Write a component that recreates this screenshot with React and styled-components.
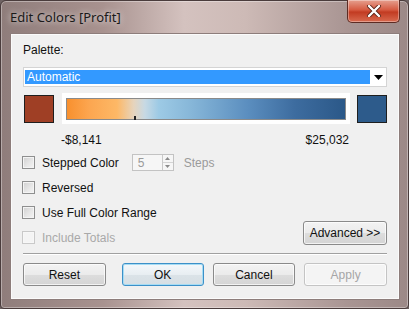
import React from "react";
import styled, { createGlobalStyle } from "styled-components";

const Global = createGlobalStyle`
  html, body { margin: 0; padding: 0; background: #6e6262; }
  body { font-family: "Liberation Sans", Arial, sans-serif; }
  * { box-sizing: border-box; }
`;

const Window = styled.div`
  width: 409px;
  height: 309px;
  display: flex;
  flex-direction: column;
  padding: 0 8px 8px 9px;
  border: 1px solid #4a3c3c;
  border-radius: 6px 6px 4px 4px;
  background:
    linear-gradient(90deg, #8f7d7b 0%, #a8928f 25%, #d4c2bf 45%, #cdbab6 60%, #a99593 85%, #9c8987 100%);
  box-shadow: inset 0 0 0 1px rgba(255,255,255,0.35);
`;

const TitleBar = styled.div`
  height: 32px;
  display: flex;
  align-items: flex-start;
  justify-content: space-between;
`;

const Title = styled.div`
  font-family: "Noto Sans", "Open Sans", sans-serif;
  font-size: 13px;
  color: #1a1a1a;
  padding-top: 7px;
  text-shadow: 0 0 6px rgba(255,255,255,0.9);
`;

const CloseButton = styled.div`
  width: 53px;
  height: 23px;
  margin-top: -1px;
  border: 1px solid #5c2b23;
  border-top: none;
  border-radius: 0 0 5px 5px;
  background: linear-gradient(180deg, #e6a08f 0%, #d65a41 45%, #c23b22 55%, #d86a4f 100%);
  display: flex;
  align-items: center;
  justify-content: center;
  box-shadow: inset 0 0 0 1px rgba(255,255,255,0.35);
`;

const Client = styled.div`
  flex: 1;
  background: #f0f0f0;
  border: 1px solid #8d7d7b;
  box-shadow: inset 0 0 0 1px #fbfbfb;
  display: flex;
  flex-direction: column;
  padding: 9px 12px 0 12px;
`;

const Label = styled.div`
  font-size: 12px;
  line-height: 14px;
  height: 14px;
  color: #111;
`;

const Dropdown = styled.div`
  margin-top: 10px;
  height: 20px;
  background: #fff;
  border: 1px solid #d4d4d4;
  display: flex;
  align-items: stretch;
  padding: 2px 0 2px 1px;
`;

const Selected = styled.div`
  flex: 1;
  background: #3399ff;
  color: #fff;
  font-size: 12px;
  line-height: 14px;
  padding-left: 2px;
`;

const Arrow = styled.div`
  width: 16px;
  display: flex;
  align-items: center;
  justify-content: center;
`;

const GradientRow = styled.div`
  margin-top: 6px;
  height: 31px;
  display: flex;
  align-items: center;
  justify-content: space-between;
`;

const Swatch = styled.div`
  width: 30px;
  height: 28px;
  margin-left: ${p => (p.$right ? "0" : "1px")};
  background: ${p => p.$color};
  border: 1px solid #1e1e1e;
`;

const GradientFrame = styled.div`
  width: 288px;
  height: 31px;
  background: #fff;
  padding: 5px 4px 4px 4px;
  display: flex;
`;

const GradientBar = styled.div`
  position: relative;
  flex: 1;
  border: 1px solid #8a8a8a;
  background: linear-gradient(90deg, #f8902e 0%, #fca650 8%, #fdb866 18%, #e6d4bd 24%, #c7d9e4 28%, #9dcae5 33%, #86b6d8 45%, #5b8ebf 65%, #3d6c9f 82%, #2b5888 100%);
`;

const Tick = styled.div`
  position: absolute;
  left: 67px;
  bottom: -1px;
  width: 2px;
  height: 4px;
  background: #222;
`;

const ValueRow = styled.div`
  display: flex;
  justify-content: space-between;
  margin-top: 9px;
  padding: 0 38px 0 38px;
  height: 14px;
  font-size: 12px;
  line-height: 14px;
  color: #111;
`;

const Options = styled.div`
  display: flex;
  justify-content: space-between;
  align-items: flex-end;
  margin-top: 7px;
`;

const OptionList = styled.div`
  display: flex;
  flex-direction: column;
  gap: 8px;
`;

const OptionRow = styled.div`
  display: flex;
  align-items: center;
  height: 17px;
  font-size: 12px;
  color: ${p => (p.$disabled ? "#a9a9a9" : "#111")};
`;

const Check = styled.span`
  width: 13px;
  height: 13px;
  margin-left: -1px;
  margin-right: 7px;
  border: 1px solid ${p => (p.$disabled ? "#c9c9c9" : "#8e8f8f")};
  background: ${p =>
    p.$disabled
      ? "#f4f4f4"
      : "linear-gradient(135deg, #d0d0d0 0%, #e8e8e8 60%, #f4f4f4 100%)"};
  box-shadow: inset 0 0 0 1px ${p => (p.$disabled ? "#f7f7f7" : "#f4f4f4")};
`;

const Spin = styled.div`
  margin-left: 13px;
  width: 42px;
  height: 17px;
  border: 1px solid #c3c3c3;
  background: #f6f6f6;
  display: flex;
  align-items: center;
  justify-content: space-between;
  padding-left: 5px;
  color: #9a9a9a;
`;

const SpinButtons = styled.div`
  width: 11px;
  height: 15px;
  border-left: 1px solid #c9c9c9;
  display: flex;
  flex-direction: column;
`;

const SpinHalf = styled.div`
  flex: 1;
  display: flex;
  align-items: center;
  justify-content: center;
  border-top: ${p => (p.$down ? "1px solid #d4d4d4" : "none")};
`;

const StepsText = styled.span`
  margin-left: 10px;
  color: #9a9a9a;
`;

const Button = styled.div`
  width: ${p => p.$w || 83}px;
  height: ${p => p.$h || 23}px;
  margin-left: ${p => p.$ml || 0}px;
  display: flex;
  align-items: center;
  justify-content: center;
  font-size: 12px;
  border-radius: 3px;
  color: ${p => (p.$disabled ? "#a6a6a6" : "#111")};
  border: 1px solid ${p => (p.$primary ? "#3c90c8" : p.$disabled ? "#c4c4c4" : "#8a8a8a")};
  background: ${p =>
    p.$disabled
      ? "#f4f4f4"
      : p.$primary
      ? "linear-gradient(180deg, #f4f8fb 0%, #e8eef2 50%, #dbe3e8 51%, #d6dee3 100%)"
      : "linear-gradient(180deg, #f3f3f3 0%, #ebebeb 50%, #dddddd 51%, #d4d4d4 100%)"};
  box-shadow: inset 0 0 0 1px ${p => (p.$primary ? "#a6dcf4" : "rgba(255,255,255,0.7)")};
`;

const AdvancedButton = styled(Button)`
  margin-bottom: 1px;
`;

const Separator = styled.div`
  margin-top: 7px;
  height: 2px;
  border-top: 1px solid #a0a0a0;
  border-bottom: 1px solid #ffffff;
`;

const ButtonRow = styled.div`
  display: flex;
  gap: 9px;
  margin-top: 8px;
`;

function Checkbox({ label, disabled, children }) {
  return (
    <OptionRow $disabled={disabled}>
      <Check $disabled={disabled} />
      {label}
      {children}
    </OptionRow>
  );
}

export default function App() {
  return (
    <>
      <Global />
      <Window>
        <TitleBar>
          <Title>Edit Colors [Profit]</Title>
          <CloseButton>
            <svg width="16" height="12" viewBox="0 0 16 12">
              <path d="M3 1 L13 11 M13 1 L3 11" stroke="#5a2418" strokeWidth="4" strokeLinecap="round" />
              <path d="M3 1 L13 11 M13 1 L3 11" stroke="#ffffff" strokeWidth="2.4" strokeLinecap="round" />
            </svg>
          </CloseButton>
        </TitleBar>
        <Client>
          <Label>Palette:</Label>
          <Dropdown>
            <Selected>Automatic</Selected>
            <Arrow>
              <svg width="9" height="5" viewBox="0 0 9 5">
                <path d="M0 0 L9 0 L4.5 5 Z" fill="#000" />
              </svg>
            </Arrow>
          </Dropdown>
          <GradientRow>
            <Swatch $color="#9f3f25" />
            <GradientFrame>
              <GradientBar>
                <Tick />
              </GradientBar>
            </GradientFrame>
            <Swatch $right $color="#2d5b8b" />
          </GradientRow>
          <ValueRow>
            <span>-$8,141</span>
            <span>$25,032</span>
          </ValueRow>
          <Options>
            <OptionList>
              <Checkbox label="Stepped Color">
                <Spin>
                  5
                  <SpinButtons>
                    <SpinHalf>
                      <svg width="5" height="3" viewBox="0 0 5 3"><path d="M0 3 L2.5 0 L5 3Z" fill="#8a8a8a" /></svg>
                    </SpinHalf>
                    <SpinHalf $down>
                      <svg width="5" height="3" viewBox="0 0 5 3"><path d="M0 0 L2.5 3 L5 0Z" fill="#8a8a8a" /></svg>
                    </SpinHalf>
                  </SpinButtons>
                </Spin>
                <StepsText>Steps</StepsText>
              </Checkbox>
              <Checkbox label="Reversed" />
              <Checkbox label="Use Full Color Range" />
              <Checkbox label="Include Totals" disabled />
            </OptionList>
            <AdvancedButton $w={84} $h={24}>Advanced &gt;&gt;</AdvancedButton>
          </Options>
          <Separator />
          <ButtonRow>
            <Button>Reset</Button>
            <Button $w={82} $ml={7} $primary>OK</Button>
            <Button>Cancel</Button>
            <Button $disabled>Apply</Button>
          </ButtonRow>
        </Client>
      </Window>
    </>
  );
}
